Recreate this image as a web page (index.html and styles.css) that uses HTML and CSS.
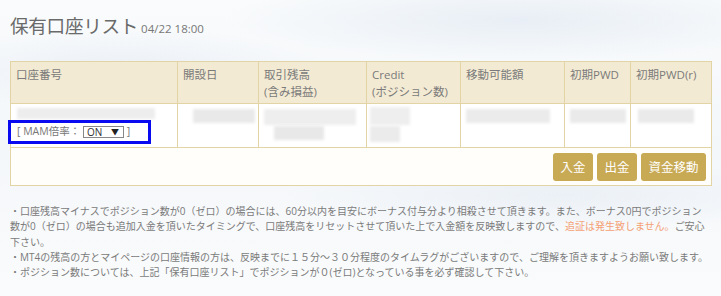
FILE: index.html
```html
<!DOCTYPE html>
<html lang="ja">
<head>
<meta charset="utf-8">
<title>保有口座リスト</title>
<link rel="stylesheet" href="styles.css">
</head>
<body>
<div class="page">
  <div class="title-bar">
    <h1 class="title">保有口座リスト</h1><span class="stamp">04/22 18:00</span>
  </div>
  <table class="accounts">
    <colgroup>
      <col class="c1"><col class="c2"><col class="c3"><col class="c4"><col class="c5"><col class="c6"><col class="c7">
    </colgroup>
    <thead>
      <tr>
        <th>口座番号</th>
        <th>開設日</th>
        <th>取引残高<br>(含み損益)</th>
        <th>Credit<br>(ポジション数)</th>
        <th>移動可能額</th>
        <th>初期PWD</th>
        <th>初期PWD(r)</th>
      </tr>
    </thead>
    <tbody>
      <tr class="data">
        <td class="first">
          <div class="blur b1"></div>
          <div class="mam">[ MAM倍率： <span class="select"><span>ON</span><span class="arrow">▼</span></span> ]</div>
        </td>
        <td><div class="blur b2"></div></td>
        <td><div class="blur b3"></div><div class="blur b3b"></div></td>
        <td><div class="blur b4"></div><div class="blur b4b"></div></td>
        <td><div class="blur b5"></div></td>
        <td><div class="blur b6"></div></td>
        <td><div class="blur b7"></div></td>
      </tr>
      <tr class="actions">
        <td colspan="7">
          <div class="btns">
            <button class="btn">入金</button>
            <button class="btn">出金</button>
            <button class="btn">資金移動</button>
          </div>
        </td>
      </tr>
    </tbody>
  </table>
  <div class="notes">
    <p>・口座残高マイナスでポジション数が0（ゼロ）の場合には、60分以内を目安にボーナス付与分より相殺させて頂きます。また、ボーナス0円でポジション数が0（ゼロ）の場合も追加入金を頂いたタイミングで、口座残高をリセットさせて頂いた上で入金額を反映致しますので、<span class="warn">追証は発生致しません。</span>ご安心下さい。</p>
    <p>・MT4の残高の方とマイページの口座情報の方は、反映までに１５分～３０分程度のタイムラグがございますので、ご理解を頂きますようお願い致します。</p>
    <p>・ポジション数については、上記「保有口座リスト」でポジションが０(ゼロ)となっている事を必ず確認して下さい。</p>
  </div>
</div>
</body>
</html>
```
FILE: styles.css
```css
html, body {
  margin: 0;
  padding: 0;
}
body {
  width: 721px;
  height: 296px;
  overflow: hidden;
  font-family: "Open Sans", "Noto Sans CJK JP", sans-serif;
  color: #777;
  background:
    radial-gradient(ellipse 420px 60px at 520px 20px, rgba(225,233,242,0.7), rgba(255,255,255,0) 70%),
    radial-gradient(ellipse 300px 60px at 120px 70px, rgba(230,236,244,0.7), rgba(255,255,255,0) 70%),
    radial-gradient(ellipse 400px 50px at 560px 195px, rgba(228,235,243,0.6), rgba(255,255,255,0) 70%),
    linear-gradient(180deg, #f9fbfc 0%, #f4f7fa 50%, #fafbfc 100%);
}
.page {
  padding: 0 10px;
}
.title-bar {
  height: 61px;
  box-sizing: border-box;
  padding-top: 12px;
  display: flex;
  align-items: baseline;
}
.title {
  margin: 0;
  font-family: "Noto Sans CJK JP", sans-serif;
  font-weight: 400;
  font-size: 18.6px;
  line-height: 26px;
  color: #6a6a6a;
  letter-spacing: -0.3px;
}
.stamp {
  font-family: "Open Sans", sans-serif;
  font-size: 11.5px;
  color: #777;
  letter-spacing: 0;
  margin-left: 3px;
}
.accounts {
  width: 701px;
  border-collapse: collapse;
  table-layout: fixed;
  background: #fffefa;
}
.c1 { width: 167px; }
.c2 { width: 81px; }
.c3 { width: 108px; }
.c4 { width: 94px; }
.c5 { width: 104px; }
.c6 { width: 66px; }
.c7 { width: 81px; }
.accounts th,
.accounts td {
  border: 1px solid #e3d4a6;
}
.accounts th {
  height: 42px;
  box-sizing: border-box;
  background: #f3ead3;
  font-weight: 400;
  font-size: 11.5px;
  line-height: 17px;
  text-align: left;
  vertical-align: top;
  padding: 4px 4px 0 5px;
  color: #7a7a7a;
}
.data td {
  height: 44px;
  box-sizing: border-box;
  background: #fff;
  vertical-align: top;
  padding: 3px 3px 0 3px;
  position: relative;
}
.blur {
  background: #e6e6e6;
  filter: blur(1.5px);
}
.b1 { width: 138px; height: 11px; margin: 1px 0 0 3px; background: #ededed; }
.b2 { width: 62px; height: 14px; margin: 2px 0 0 12px; background: #e9e9e9; }
.b3 { width: 92px; height: 16px; margin: 2px 0 0 2px; background: #eeeeee; }
.b3b { width: 50px; height: 14px; margin: 1px 0 0 12px; background: #e8e8e8; }
.b4 { width: 40px; height: 18px; margin: 0 0 0 0; background: #eeeeee; }
.b4b { width: 30px; height: 16px; margin: 1px 0 0 0; background: #ebebeb; }
.b5 { width: 84px; height: 14px; margin: 2px 0 0 2px; background: #ebebeb; }
.b6 { width: 56px; height: 14px; margin: 2px 0 0 2px; background: #eaeaea; }
.b7 { width: 56px; height: 14px; margin: 2px 0 0 4px; background: #eaeaea; }
.mam {
  position: absolute;
  left: -3px;
  top: 16px;
  width: 143px;
  height: 24px;
  box-sizing: border-box;
  border: 3px solid #0a0af0;
  background: #fff;
  font-family: "Open Sans", "Noto Sans CJK JP", sans-serif;
  font-size: 10.5px;
  line-height: 17px;
  padding-left: 6px;
  color: #777;
  white-space: nowrap;
}
.select {
  display: inline-flex;
  align-items: center;
  justify-content: space-between;
  width: 41px;
  height: 12px;
  box-sizing: border-box;
  border: 1px solid #888;
  padding: 0 4px 0 3px;
  font-size: 10px;
  line-height: 10px;
  color: #333;
  vertical-align: -1px;
  background: #fff;
}
.select .arrow {
  font-size: 8px;
  color: #222;
}
.actions td {
  height: 38px;
  box-sizing: border-box;
  padding: 4px 5px 4px 0;
  background: #fffefa;
}
.btns {
  display: flex;
  justify-content: flex-end;
  gap: 4px;
}
.btn {
  height: 28px;
  padding: 0 7.5px;
  border: none;
  border-radius: 3px;
  background: #c8a954;
  color: #fff;
  font-family: "Noto Sans CJK JP", sans-serif;
  font-size: 12.5px;
  line-height: 28px;
}
.notes {
  margin-top: 18px;
  width: 701px;
  font-family: "Open Sans", "Noto Sans CJK JP", sans-serif;
  font-size: 10px;
  line-height: 15.3px;
  color: #7a7a7a;
}
.notes p {
  margin: 0;
}
.warn {
  color: #f4a074;
}
```
